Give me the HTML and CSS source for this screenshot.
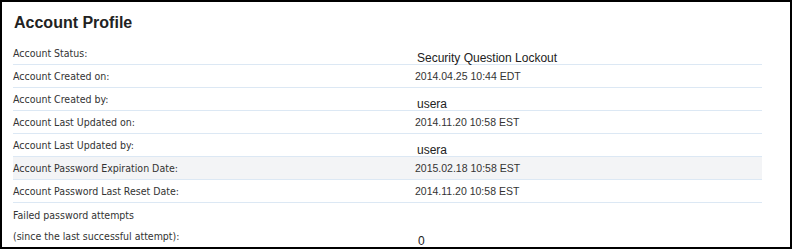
FILE: index.html
```html
<!DOCTYPE html>
<html lang="en">
<head>
    <meta charset="UTF-8">
    <meta name="viewport" content="width=device-width, initial-scale=1.0">
    <title>Account Profile</title>
    <link rel="stylesheet" href="styles.css">
</head>
<body>
    <div class="frame">
        <h1>Account Profile</h1>

        <table class="profile">
            <tr>
                <td class="label">Account Status:</td>
                <td class="value plain">Security Question Lockout</td>
            </tr>
            <tr>
                <td class="label">Account Created on:</td>
                <td class="value">2014.04.25 10:44 EDT</td>
            </tr>
            <tr>
                <td class="label">Account Created by:</td>
                <td class="value plain">usera</td>
            </tr>
            <tr>
                <td class="label">Account Last Updated on:</td>
                <td class="value">2014.11.20 10:58 EST</td>
            </tr>
            <tr>
                <td class="label">Account Last Updated by:</td>
                <td class="value plain">usera</td>
            </tr>
            <tr class="hover">
                <td class="label">Account Password Expiration Date:</td>
                <td class="value">2015.02.18 10:58 EST</td>
            </tr>
            <tr>
                <td class="label">Account Password Last Reset Date:</td>
                <td class="value">2014.11.20 10:58 EST</td>
            </tr>
            <tr class="tall">
                <td class="label">Failed password attempts<br>(since the last successful attempt):</td>
                <td class="value plain">0</td>
            </tr>
        </table>
    </div>
</body>
</html>
```

FILE: styles.css
```css
html, body {
    margin: 0;
    padding: 0;
    background-color: #fff;
}
.frame {
    box-sizing: border-box;
    width: 792px;
    height: 249px;
    border: 2px solid #000;
    padding: 0 28px 0 11px;
    overflow: hidden;
}
h1 {
    font-family: "Liberation Sans", Arial, sans-serif;
    font-size: 16px;
    font-weight: bold;
    color: #222;
    margin: 0;
    padding: 10px 0 0 1px;
    height: 30px;
    line-height: 22px;
}
.profile {
    width: 749px;
    border-collapse: collapse;
}
.profile td {
    border-bottom: 1px solid #dce8f4;
    height: 22px;
    padding: 0;
    vertical-align: middle;
    color: #333;
}
.profile .hover td {
    background-color: #f3f4f6;
}
.label {
    width: 402px;
    font-family: "DejaVu Sans Condensed", "DejaVu Sans", sans-serif;
    font-size: 10.5px;
    line-height: 22px;
}
.value {
    font-family: "Liberation Sans", Arial, sans-serif;
    font-size: 10.5px;
    line-height: 14px;
}
.value.plain {
    font-size: 12px;
    line-height: 12px;
    vertical-align: bottom;
    padding-left: 2px;
    color: #222;
}
.tall td {
    height: 43px;
}
.tall .label {
    line-height: 21px;
    padding-top: 1px;
}
.tall .value.plain {
    padding-left: 3px;
}
```
